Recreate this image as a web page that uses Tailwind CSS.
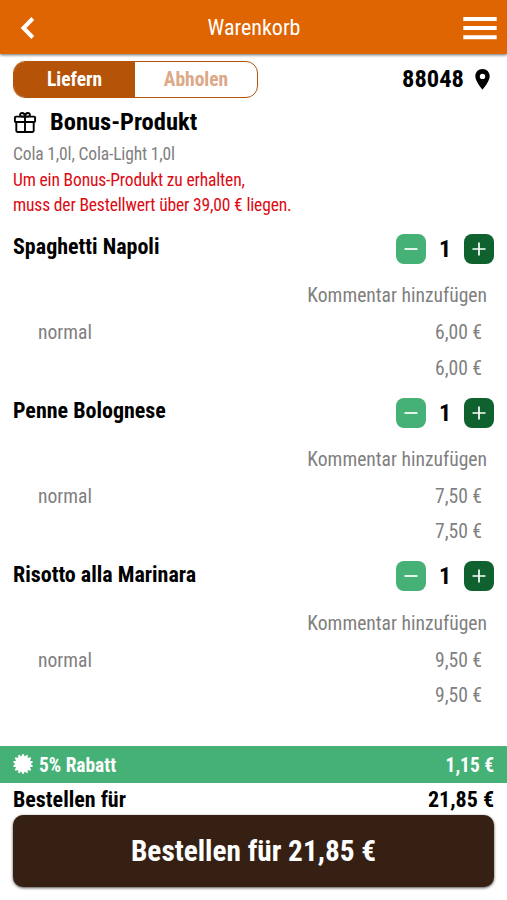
<!DOCTYPE html>
<html lang="de"><head><meta charset="utf-8"><title>Warenkorb</title><script src="https://cdn.jsdelivr.net/npm/@tailwindcss/browser@4"></script></head>
<body class="bg-white font-['Roboto_Condensed',Roboto,sans-serif] w-[507px] h-[900px] overflow-hidden flex flex-col text-black">
<header class="h-[54px] shrink-0 bg-[#df6502] shadow-[0_1px_3px_rgba(0,0,0,.6)] grid grid-cols-[1fr_auto_1fr] items-center pl-5 pr-[10px] pt-[2px] text-white">
<svg width="16" height="24" viewBox="0 0 16 24" fill="none" stroke="#fff" stroke-width="4"><path d="M12.8 2.500L3.500 12l9.300 9.500"/></svg>
<h1 class="text-[22px] leading-none whitespace-nowrap pr-[9px]">Warenkorb</h1>
<svg class="justify-self-end" width="34" height="24" viewBox="0 0 34 24" fill="#fff"><path d="M.3 1h33.400v4H.3zM.3 10.100h33.400v4H.3zM.3 19.200h33.400v4H.3z"/></svg>
</header>
<main class="flex-1 px-[13px] text-[#808080]">
<div class="h-[50px] flex items-center justify-between font-bold text-black">
<div class="w-[245px] h-[37px] border border-[#b55309] rounded-[12px] flex overflow-hidden text-[19.5px]"><button class="w-[121px] pt-[2px] bg-[#b55309] text-white">Liefern</button><button class="flex-1 pt-[2px] text-[#dda888]">Abholen</button></div>
<div class="flex items-center gap-[11px] pr-[4px] text-[24.5px]">88048<svg width="15" height="21" viewBox="0 0 15 21"><path fill="#000" fill-rule="evenodd" d="M7.500 0C3.300 0 .3 3.200.3 7.300c0 5.200 7.200 13.400 7.200 13.400s7.200-8.200 7.200-13.400C14.700 3.200 11.700 0 7.500 0zm0 4.700a2.700 2.700 0 1 1 0 5.400 2.700 2.700 0 0 1 0-5.400z"/></svg></div>
</div>
<section>
<h2 class="h-[38px] pb-[1px] flex items-center gap-[13px] text-[24.5px] font-bold text-black"><svg width="24" height="22" viewBox="0 0 24 22" fill="none" stroke="#000" stroke-width="1.900" stroke-linejoin="round"><rect x="1.900" y="4.600" width="20.200" height="5.400" rx="1"/><path d="M3.300 10v8.800q0 1.200 1.200 1.200h15q1.200 0 1.200-1.200V10M12 4.600V20M12 4.600H9.200C6.500 4.600 6.300 1 9 1c2 0 3 1.600 3 3.600zM12 4.600h2.800c2.700 0 2.900-3.600.2-3.600-2 0-3 1.600-3 3.600z"/></svg>Bonus-Produkt</h2>
<p class="text-[17.5px] tracking-[-0.160px] leading-[25.700px]">Cola 1,0l, Cola-Light 1,0l</p>
<p class="text-[17.5px] tracking-[-0.160px] leading-[25.700px] text-[#dc0a12]">Um ein Bonus-Produkt zu erhalten,<br>muss der Bestellwert über 39,00 € liegen.</p>
</section>
<ul class="pt-[10.800px] text-[19.6px]">
<li class="h-[163.700px]">
<div class="h-[38px] flex items-center justify-between font-bold text-black"><h3 class="text-[22px] pb-[4px]">Spaghetti Napoli</h3><div class="flex items-center text-[24px]"><button class="size-[30px] rounded-[8px] bg-[#45b176] grid place-items-center"><svg width="14" height="14" viewBox="0 0 14 14" stroke="#fff" stroke-width="1.700"><path d="M.5 7h13"/></svg></button><span class="w-[38px] text-center">1</span><button class="size-[30px] rounded-[8px] bg-[#0f622e] grid place-items-center"><svg width="14" height="14" viewBox="0 0 14 14" stroke="#fff" stroke-width="1.700"><path d="M.5 7h13M7 .5v13"/></svg></button></div></div>
<p class="h-[56px] flex items-center justify-end pr-[7px]">Kommentar hinzufügen</p>
<div class="h-[18px] flex items-center justify-between pl-[25px] pr-[12px]"><span>normal</span><span>6,00 €</span></div>
<p class="h-[53px] flex items-center justify-end pr-[12px]">6,00 €</p>
</li>
<li class="h-[163.700px]">
<div class="h-[38px] flex items-center justify-between font-bold text-black"><h3 class="text-[22px] pb-[4px]">Penne Bolognese</h3><div class="flex items-center text-[24px]"><button class="size-[30px] rounded-[8px] bg-[#45b176] grid place-items-center"><svg width="14" height="14" viewBox="0 0 14 14" stroke="#fff" stroke-width="1.700"><path d="M.5 7h13"/></svg></button><span class="w-[38px] text-center">1</span><button class="size-[30px] rounded-[8px] bg-[#0f622e] grid place-items-center"><svg width="14" height="14" viewBox="0 0 14 14" stroke="#fff" stroke-width="1.700"><path d="M.5 7h13M7 .5v13"/></svg></button></div></div>
<p class="h-[56px] flex items-center justify-end pr-[7px]">Kommentar hinzufügen</p>
<div class="h-[18px] flex items-center justify-between pl-[25px] pr-[12px]"><span>normal</span><span>7,50 €</span></div>
<p class="h-[53px] flex items-center justify-end pr-[12px]">7,50 €</p>
</li>
<li class="h-[163.700px]">
<div class="h-[38px] flex items-center justify-between font-bold text-black"><h3 class="text-[22px] pb-[4px]">Risotto alla Marinara</h3><div class="flex items-center text-[24px]"><button class="size-[30px] rounded-[8px] bg-[#45b176] grid place-items-center"><svg width="14" height="14" viewBox="0 0 14 14" stroke="#fff" stroke-width="1.700"><path d="M.5 7h13"/></svg></button><span class="w-[38px] text-center">1</span><button class="size-[30px] rounded-[8px] bg-[#0f622e] grid place-items-center"><svg width="14" height="14" viewBox="0 0 14 14" stroke="#fff" stroke-width="1.700"><path d="M.5 7h13M7 .5v13"/></svg></button></div></div>
<p class="h-[56px] flex items-center justify-end pr-[7px]">Kommentar hinzufügen</p>
<div class="h-[18px] flex items-center justify-between pl-[25px] pr-[12px]"><span>normal</span><span>9,50 €</span></div>
<p class="h-[53px] flex items-center justify-end pr-[12px]">9,50 €</p>
</li>
</ul>
</main>
<footer class="h-[154px] shrink-0 font-bold">
<div class="h-[36.500px] px-[13px] bg-[#45b176] text-white text-[19.4px] flex items-center justify-between"><div class="flex items-center gap-[6px]"><svg width="20" height="20" viewBox="0 0 20 20"><g fill="#fff"><circle cx="10" cy="10" r="7.800"/><path id="t" d="M8.200 2.800L9.500 0h1l1.300 2.800v14.400L10.500 20h-1l-1.300-2.800z"/><use href="#t" transform="rotate(25.714 10 10)"/><use href="#t" transform="rotate(51.429 10 10)"/><use href="#t" transform="rotate(77.143 10 10)"/><use href="#t" transform="rotate(102.857 10 10)"/><use href="#t" transform="rotate(128.571 10 10)"/><use href="#t" transform="rotate(154.286 10 10)"/></g></svg><span class="pt-[2px]">5% Rabatt</span></div><span class="pt-[2px]">1,15 €</span></div>
<div class="h-[32px] px-[13px] pt-[2px] text-[22px] flex items-center justify-between"><span>Bestellen für</span><span>21,85 €</span></div>
<button class="block mx-[13px] w-[481px] h-[72px] pt-[2px] rounded-[10px] bg-[#352013] text-white text-[29.3px] shadow-[0_1px_3px_rgba(0,0,0,.7)]">Bestellen für 21,85 €</button>
</footer>
</body></html>
